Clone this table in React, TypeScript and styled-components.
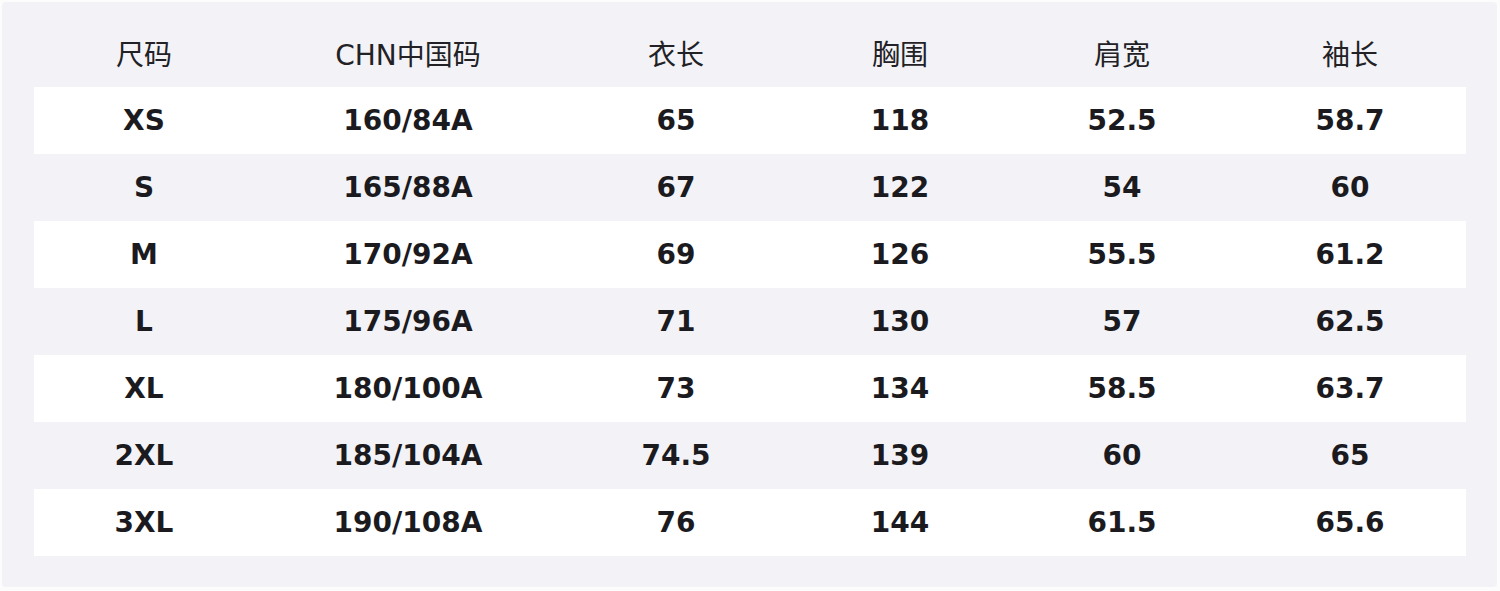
import styled, { createGlobalStyle } from "styled-components";

const GlobalStyle = createGlobalStyle`
  html, body {
    margin: 0;
    padding: 0;
    background: #fcfcfd;
  }
  body {
    font-family: "DejaVu Sans", "Noto Sans CJK SC", sans-serif;
  }
`;

const Page = styled.div`
  width: 1500px;
  height: 591px;
  padding: 2px 3px 4px 2px;
  box-sizing: border-box;
`;

const Panel = styled.div`
  height: 100%;
  background: #f3f3f7;
  border-radius: 4px;
  padding: 16px 31px 31px 32px;
  box-sizing: border-box;
`;

const Table = styled.table`
  width: 1432px;
  border-collapse: collapse;
  table-layout: fixed;
`;

const HeadCell = styled.th`
  height: 69px;
  padding: 0;
  font-family: "DejaVu Sans", "Noto Sans CJK SC", sans-serif;
  font-size: 28px;
  font-weight: 400;
  color: #222226;
  text-align: center;
  vertical-align: middle;
`;

const Row = styled.tr<{ $striped: boolean }>`
  height: 67px;
  background: ${(p) => (p.$striped ? "#ffffff" : "transparent")};
`;

const Cell = styled.td`
  padding: 0;
  font-family: "DejaVu Sans", sans-serif;
  font-size: 28px;
  font-weight: 700;
  color: #1b1b1f;
  text-align: center;
  vertical-align: middle;
`;

const columns = [
  { label: "尺码", width: 220 },
  { label: "CHN中国码", width: 308 },
  { label: "衣长", width: 228 },
  { label: "胸围", width: 220 },
  { label: "肩宽", width: 224 },
  { label: "袖长", width: 232 },
];

const rows = [
  ["XS", "160/84A", "65", "118", "52.5", "58.7"],
  ["S", "165/88A", "67", "122", "54", "60"],
  ["M", "170/92A", "69", "126", "55.5", "61.2"],
  ["L", "175/96A", "71", "130", "57", "62.5"],
  ["XL", "180/100A", "73", "134", "58.5", "63.7"],
  ["2XL", "185/104A", "74.5", "139", "60", "65"],
  ["3XL", "190/108A", "76", "144", "61.5", "65.6"],
];

export default function App() {
  return (
    <>
      <GlobalStyle />
      <Page>
        <Panel>
          <Table>
            <colgroup>
              {columns.map((c) => (
                <col key={c.label} style={{ width: c.width }} />
              ))}
            </colgroup>
            <thead>
              <tr>
                {columns.map((c) => (
                  <HeadCell key={c.label}>{c.label}</HeadCell>
                ))}
              </tr>
            </thead>
            <tbody>
              {rows.map((r, i) => (
                <Row key={r[0]} $striped={i % 2 === 0}>
                  {r.map((v, j) => (
                    <Cell key={j}>{v}</Cell>
                  ))}
                </Row>
              ))}
            </tbody>
          </Table>
        </Panel>
      </Page>
    </>
  );
}
